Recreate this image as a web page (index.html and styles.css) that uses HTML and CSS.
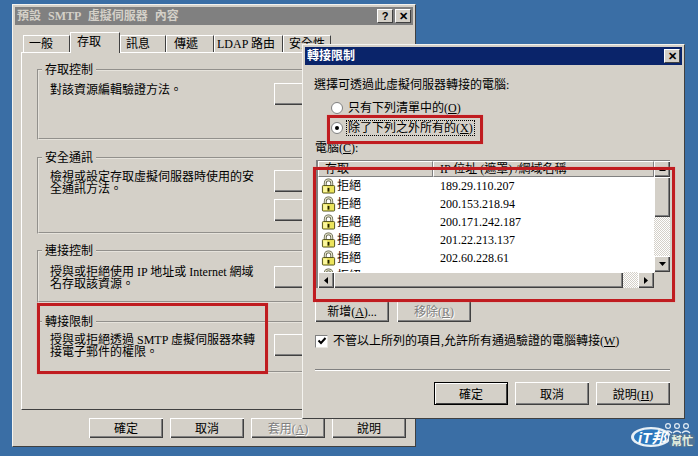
FILE: index.html
```html
<!DOCTYPE html>
<html lang="zh-Hant">
<head>
  <meta charset="UTF-8" />
  <title>預設 SMTP 虛擬伺服器 內容</title>
  <link rel="stylesheet" href="styles.css">
</head>
<body>
  <svg class="defs" width="0" height="0">
    <symbol id="lock" viewBox="0 0 16 16">
      <path d="M4.5 8V5a3.5 3.5 0 0 1 7 0v3" fill="none" stroke="#55553a" stroke-width="3"/>
      <path d="M4.5 8V5a3.5 3.5 0 0 1 7 0v3" fill="none" stroke="#e4e4cc" stroke-width="1.4"/>
      <rect x="1.5" y="7.5" width="13" height="8" rx="1" fill="#ece45c" stroke="#4c4c18"/>
      <rect x="2.5" y="8.5" width="4" height="6" fill="#fbf7a0"/>
      <rect x="7" y="10" width="2" height="4" fill="#202000"/>
    </symbol>
  </svg>

  <!-- properties window behind -->
  <div class="window props">
    <div class="titlebar inactive">
      <span class="title-text">預設 SMTP 虛擬伺服器 內容</span>
      <div class="title-btns">
        <span class="cap-btn">?</span>
        <span class="cap-btn">✕</span>
      </div>
    </div>

    <div class="tabs">
      <div class="tab tab-general">一般</div>
      <div class="tab tab-active">存取</div>
      <div class="tab tab-msg">訊息</div>
      <div class="tab tab-send">傳遞</div>
      <div class="tab tab-ldap">LDAP 路由</div>
      <div class="tab tab-sec">安全性</div>
    </div>

    <div class="panel">
      <fieldset class="group group-access">
        <legend>存取控制</legend>
        <div class="group-body">
          <p>對該資源編輯驗證方法。</p>
          <div class="group-btns"><button class="btn"></button></div>
        </div>
      </fieldset>
      <fieldset class="group group-secure">
        <legend>安全通訊</legend>
        <div class="group-body">
          <p>檢視或設定存取虛擬伺服器時使用的安全通訊方法。</p>
          <div class="group-btns"><button class="btn"></button><button class="btn"></button></div>
        </div>
      </fieldset>
      <fieldset class="group group-conn">
        <legend>連接控制</legend>
        <div class="group-body">
          <p>授與或拒絕使用 IP 地址或 Internet 網域名存取該資源。</p>
          <div class="group-btns"><button class="btn"></button></div>
        </div>
      </fieldset>
      <fieldset class="group group-relay">
        <legend>轉接限制</legend>
        <div class="group-body">
          <p>授與或拒絕透過 SMTP 虛擬伺服器來轉接電子郵件的權限。</p>
          <div class="group-btns"><button class="btn"></button></div>
        </div>
      </fieldset>
    </div>

    <div class="footer props-footer">
      <button class="btn">確定</button>
      <button class="btn">取消</button>
      <button class="btn disabled">套用(<u>A</u>)</button>
      <button class="btn">說明</button>
    </div>
  </div>

  <!-- relay restrictions dialog -->
  <div class="window relay">
    <div class="titlebar">
      <span class="title-text">轉接限制</span>
      <div class="title-btns">
        <span class="cap-btn">✕</span>
      </div>
    </div>

    <div class="relay-body">
      <p class="intro">選擇可透過此虛擬伺服器轉接的電腦:</p>

      <div class="radios">
        <div class="radio-row"><span class="radio"></span>只有下列清單中的(<u>O</u>)</div>
        <div class="radio-row"><span class="radio on"></span><span class="focus">除了下列之外所有的(<u>X</u>)</span></div>
      </div>

      <div class="list-label">電腦(<u>C</u>):</div>

      <div class="list">
        <div class="list-main">
          <div class="list-head">
            <div class="head-cell col-access">存取</div>
            <div class="head-cell col-ip">IP 位址 (遮罩) /網域名稱</div>
          </div>
          <div class="list-rows">
            <div class="row"><div class="col-access"><svg class="lock"><use href="#lock"/></svg>拒絕</div><div class="col-ip">189.29.110.207</div></div>
            <div class="row"><div class="col-access"><svg class="lock"><use href="#lock"/></svg>拒絕</div><div class="col-ip">200.153.218.94</div></div>
            <div class="row"><div class="col-access"><svg class="lock"><use href="#lock"/></svg>拒絕</div><div class="col-ip">200.171.242.187</div></div>
            <div class="row"><div class="col-access"><svg class="lock"><use href="#lock"/></svg>拒絕</div><div class="col-ip">201.22.213.137</div></div>
            <div class="row"><div class="col-access"><svg class="lock"><use href="#lock"/></svg>拒絕</div><div class="col-ip">202.60.228.61</div></div>
            <div class="row"><div class="col-access"><svg class="lock"><use href="#lock"/></svg>拒絕</div></div>
          </div>
        </div>
        <div class="vscroll">
          <span class="sb-btn"><svg width="7" height="4"><path d="M3.5 0L7 4H0z"/></svg></span>
          <span class="sb-thumb"></span>
          <span class="sb-track"></span>
          <span class="sb-btn"><svg width="7" height="4"><path d="M0 0H7L3.5 4z"/></svg></span>
        </div>
        <div class="hscroll">
          <span class="sb-btn"><svg width="4" height="7"><path d="M4 0V7L0 3.5z"/></svg></span>
          <span class="sb-thumb"></span>
          <span class="sb-track"></span>
          <span class="sb-btn"><svg width="4" height="7"><path d="M0 0L4 3.5L0 7z"/></svg></span>
        </div>
        <div class="corner"></div>
      </div>

      <div class="list-btns">
        <button class="btn">新增(<u>A</u>)...</button>
        <button class="btn disabled">移除(<u>R</u>)</button>
      </div>

      <div class="check-row">
        <span class="check"><svg width="10" height="10"><path d="M1.5 4.5L4 7L8.5 2" fill="none" stroke="#000" stroke-width="2"/></svg></span>
        不管以上所列的項目,允許所有通過驗證的電腦轉接(<u>W</u>)
      </div>

      <div class="sep"></div>

      <div class="footer">
        <button class="btn default">確定</button>
        <button class="btn">取消</button>
        <button class="btn">說明(<u>H</u>)</button>
      </div>
    </div>
  </div>

  <!-- red annotations -->
  <div class="mark mark-relay"></div>
  <div class="mark mark-radio"></div>
  <div class="mark mark-list"></div>

  <!-- site watermark -->
  <svg class="watermark" width="68" height="34" viewBox="0 0 68 34">
    <ellipse cx="21" cy="17" rx="20" ry="10" fill="#e8f0f6"/>
    <ellipse cx="21" cy="17" rx="17" ry="7.8" fill="#2d78bd"/>
    <text x="8" y="22.5" class="wm-it">iT邦</text>
    <rect x="39" y="14" width="26" height="13" rx="4" fill="#4f7396"/>
    <text x="41" y="25" class="wm-help">幫忙</text>
    <g fill="none" stroke="#e3ecf4" stroke-width="1.2">
      <circle cx="38" cy="6" r="2.4"/>
      <circle cx="47" cy="6" r="2.4"/>
      <circle cx="56" cy="6" r="2.4"/>
      <path d="M34 13q4-4 8 0M43 13q4-4 8 0M52 13q4-4 8 0"/>
    </g>
  </svg>
</body>
</html>
```

FILE: styles.css
```css
body {
  margin: 0;
  width: 698px;
  height: 456px;
  position: relative;
  overflow: hidden;
  background-color: #3a6ea5;
  font-family: "Liberation Serif", "Noto Sans CJK TC", serif;
  font-size: 12px;
  line-height: 12px;
  color: #000;
}

.defs {
  position: absolute;
}

p {
  margin: 0;
}

/* windows */
.window {
  position: absolute;
  box-sizing: border-box;
  background-color: #d4d0c8;
  padding: 2px;
  border: 1px solid;
  border-color: #f4f3ef #404040 #404040 #f4f3ef;
}

.props {
  left: 12px;
  top: 4px;
  width: 404px;
  height: 443px;
}

.relay {
  left: 302px;
  top: 44px;
  width: 383px;
  height: 375px;
}

.titlebar {
  display: flex;
  justify-content: space-between;
  align-items: center;
  height: 18px;
  padding: 0 2px;
  background-color: #0a246a;
  color: #fff;
  font-weight: bold;
}

.titlebar.inactive {
  background-color: #808080;
  color: #d4d0c8;
}

.title-text {
  word-spacing: 4px;
}

.title-btns {
  display: flex;
  gap: 2px;
}

.cap-btn {
  box-sizing: border-box;
  width: 16px;
  height: 14px;
  display: flex;
  align-items: center;
  justify-content: center;
  background-color: #d4d0c8;
  color: #000;
  font-family: "Liberation Sans", sans-serif;
  font-size: 11px;
  border: 1px solid;
  border-color: #fff #404040 #404040 #fff;
}

/* tabs */
.tabs {
  display: flex;
  align-items: flex-end;
  height: 27px;
  margin-left: 8px;
  box-sizing: border-box;
}

.tab {
  box-sizing: border-box;
  height: 17px;
  padding-top: 2px;
  border-top: 1px solid #fff;
  border-left: 1px solid #fff;
  border-right: 1px solid #404040;
}

.tab-general { width: 47px; padding-left: 5px; }
.tab-msg { width: 46px; padding-left: 5px; }
.tab-send { width: 48px; padding-left: 7px; }
.tab-ldap { width: 69px; padding-left: 2px; }
.tab-sec { width: 48px; padding-left: 5px; }

.tab-active {
  width: 50px;
  height: 21px;
  margin-bottom: -1px;
  padding-top: 3px;
  padding-left: 6px;
  background-color: #d4d0c8;
  position: relative;
}

.panel {
  box-sizing: border-box;
  height: 358px;
  margin-left: 6px;
  margin-right: 2px;
  padding: 10px 14px 0 15px;
  border: 1px solid;
  border-color: #fff #404040 #404040 #fff;
}

/* option groups */
.group {
  box-sizing: border-box;
  margin: 0 0 11px;
  padding: 0 0 0 11px;
  border: 2px groove #e6e3dc;
  border-right: 0;
  min-width: 0;
}

.group legend {
  padding: 0 3px;
  margin-left: -8px;
  line-height: 14px;
}

.group-access { height: 77px; }
.group-secure { height: 83px; margin-bottom: 10px; }
.group-conn { height: 59px; margin-bottom: 12px; }
.group-relay { height: 58px; }

.group-body {
  display: flex;
  justify-content: space-between;
  padding-top: 5px;
}

.group-access .group-body { padding-top: 6px; }
.group-conn .group-body { padding-top: 8px; }

.group-access p,
.group-secure p {
  padding-top: 1px;
}

.group-body p {
  width: 205px;
}

.group-btns {
  display: flex;
  flex-direction: column;
  gap: 7px;
  margin-right: 48px;
}

/* push buttons */
.btn {
  box-sizing: border-box;
  width: 74px;
  height: 22px;
  padding: 0;
  font-family: inherit;
  font-size: 12px;
  background-color: #d4d0c8;
  color: #000;
  border: 0;
  box-shadow: inset 1px 1px 0 #fff, inset -1px -1px 0 #404040, inset -2px -2px 0 #808080;
}

.btn.disabled {
  color: #808080;
  text-shadow: 1px 1px 0 #fff;
}

.btn.default {
  outline: 1px solid #000;
  outline-offset: -1px;
  box-shadow: inset 2px 2px 0 #fff, inset -2px -2px 0 #404040;
}

.footer {
  display: flex;
  justify-content: flex-end;
  gap: 7px;
}

.props-footer {
  margin-top: 8px;
  margin-right: 7px;
}

.props-footer .btn {
  height: 20px;
}

/* relay dialog */
.relay-body {
  padding: 14px 12px 0 10px;
}

.intro {
  margin-left: -1px;
}

.radios {
  margin: 11px 0 0 16px;
  display: flex;
  flex-direction: column;
  gap: 8px;
}

.radio-row {
  display: flex;
  align-items: center;
  height: 12px;
}

.radio {
  box-sizing: border-box;
  flex: none;
  width: 12px;
  height: 12px;
  margin-right: 5px;
  border-radius: 50%;
  background-color: #fff;
  border: 1px solid #808080;
  display: flex;
  align-items: center;
  justify-content: center;
}

.radio.on::after {
  content: "";
  width: 4px;
  height: 4px;
  border-radius: 50%;
  background-color: #000;
}

.focus {
  outline: 1px dotted #000;
  outline-offset: 1px;
}

.list-label {
  margin-top: 8px;
}

.list {
  box-sizing: border-box;
  display: grid;
  grid-template-columns: 336px 16px;
  grid-template-rows: 111px 16px;
  width: 354px;
  height: 128px;
  margin-top: 6px;
  margin-left: 1px;
  background-color: #fff;
  border-style: solid;
  border-width: 1px 0 0 2px;
  border-color: #808080;
}

.list-main {
  overflow: hidden;
}

.list-head {
  display: flex;
  height: 16px;
  background-color: #d4d0c8;
}

.head-cell {
  box-sizing: border-box;
  height: 16px;
  line-height: 15px;
  border-top: 1px solid #fff;
  border-left: 1px solid #fff;
  border-right: 1px solid #808080;
  border-bottom: 1px solid #808080;
}

.head-cell.col-access {
  width: 115px;
  padding-left: 6px;
}

.head-cell.col-ip {
  flex: 1;
  padding-left: 6px;
}

.row {
  display: flex;
  align-items: center;
  height: 18px;
}

.row .col-access {
  display: flex;
  align-items: center;
  width: 115px;
  padding-left: 3px;
  box-sizing: border-box;
}

.row .col-ip {
  padding-left: 7px;
}

.lock {
  width: 15px;
  height: 16px;
  margin-right: 1px;
}

/* scrollbars */
.vscroll,
.hscroll {
  display: flex;
  background-color: #d4d0c8;
}

.vscroll {
  flex-direction: column;
}

.sb-btn {
  flex: none;
  width: 16px;
  height: 16px;
  display: flex;
  align-items: center;
  justify-content: center;
  box-sizing: border-box;
  background-color: #d4d0c8;
  box-shadow: inset 1px 1px 0 #fff, inset -1px -1px 0 #404040, inset -2px -2px 0 #808080;
}

.sb-thumb {
  background-color: #d4d0c8;
  box-shadow: inset 1px 1px 0 #fff, inset -1px -1px 0 #404040, inset -2px -2px 0 #808080;
}

.vscroll .sb-thumb { height: 40px; }
.hscroll .sb-thumb { width: 289px; }

.sb-track {
  flex: 1;
  background-image: repeating-conic-gradient(#d4d0c8 0 25%, #fff 0 50%);
  background-size: 2px 2px;
}

.corner {
  background-color: #d4d0c8;
}

.list-btns {
  display: flex;
  gap: 8px;
  margin-top: 12px;
}

.check-row {
  display: flex;
  align-items: center;
  margin-top: 12px;
  height: 14px;
}

.check {
  box-sizing: border-box;
  width: 13px;
  height: 13px;
  margin-right: 5px;
  background-color: #fff;
  border: 1px solid;
  border-color: #808080 #e8e6e0 #e8e6e0 #808080;
  display: flex;
  align-items: center;
  justify-content: center;
}

.sep {
  height: 0;
  margin-top: 21px;
  border-top: 1px solid #808080;
  border-bottom: 1px solid #fff;
}

.relay-body .footer {
  margin-top: 11px;
}

.relay-body .footer .btn {
  height: 23px;
}

/* annotations */
.mark {
  position: absolute;
  box-sizing: border-box;
  border: 3px solid #c01c20;
  box-shadow: 0 0 1px #e88;
}

.mark-relay {
  left: 37px;
  top: 303px;
  width: 231px;
  height: 71px;
}

.mark-radio {
  left: 327px;
  top: 115px;
  width: 156px;
  height: 29px;
}

.mark-list {
  left: 313px;
  top: 167px;
  width: 362px;
  height: 135px;
}

/* watermark */
.watermark {
  position: absolute;
  left: 630px;
  top: 420px;
}

.wm-it {
  font-family: "Liberation Sans", "Noto Sans CJK TC", sans-serif;
  font-size: 15px;
  font-weight: bold;
  font-style: italic;
  fill: #fff;
}

.wm-help {
  font-family: "Noto Sans CJK TC", sans-serif;
  font-size: 11px;
  font-weight: bold;
  fill: #e8f2e0;
}
```
